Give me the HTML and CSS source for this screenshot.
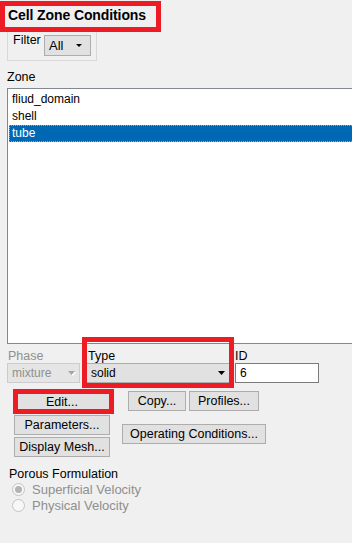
FILE: index.html
```html
<!DOCTYPE html>
<html lang="en">
<head>
    <meta charset="UTF-8">
    <meta name="viewport" content="width=device-width, initial-scale=1.0">
    <title>Cell Zone Conditions</title>
    <link rel="stylesheet" href="styles.css">
</head>
<body>
    <div class="panel">
        <div class="title">Cell Zone Conditions</div>

        <div class="filter-group">
            <span class="filter-label">Filter</span>
            <div class="combo combo-filter">
                <span>All</span>
                <svg class="caret" width="6" height="3" viewBox="0 0 6 3"><polygon points="0,0 6,0 3,3" fill="#000"/></svg>
            </div>
        </div>

        <div class="zone-label">Zone</div>
        <ul class="zone-list">
            <li>fliud_domain</li>
            <li>shell</li>
            <li class="selected">tube</li>
        </ul>

        <div class="fields">
            <div class="field field-phase">
                <span class="field-label disabled">Phase</span>
                <div class="combo combo-disabled">
                    <span>mixture</span>
                    <svg class="caret" width="8" height="5" viewBox="0 0 8 5"><polygon points="1,1 8,1 4.5,5" fill="#fff"/><polygon points="0,0 7,0 3.5,4" fill="#a3a3a3"/></svg>
                </div>
            </div>
            <div class="field field-type marked">
                <span class="field-label">Type</span>
                <div class="combo combo-type">
                    <span>solid</span>
                    <svg class="caret" width="7" height="4" viewBox="0 0 7 4"><polygon points="0,0 7,0 3.5,4" fill="#000"/></svg>
                </div>
            </div>
            <div class="field field-id">
                <span class="field-label">ID</span>
                <div class="text-input">6</div>
            </div>
        </div>

        <div class="actions">
            <div class="actions-left">
                <button class="btn btn-edit marked">Edit...</button>
                <button class="btn btn-params">Parameters...</button>
                <button class="btn btn-mesh">Display Mesh...</button>
            </div>
            <div class="actions-right">
                <div class="actions-row">
                    <button class="btn btn-copy">Copy...</button>
                    <button class="btn btn-profiles">Profiles...</button>
                </div>
                <button class="btn btn-operating">Operating Conditions...</button>
            </div>
        </div>

        <div class="porous">
            <div class="porous-label">Porous Formulation</div>
            <div class="radio checked"><span class="radio-circle"></span>Superficial Velocity</div>
            <div class="radio"><span class="radio-circle"></span>Physical Velocity</div>
        </div>
    </div>
</body>
</html>
```

FILE: styles.css
```css
body {
    margin: 0;
    background-color: #f0f0f0;
    color: #000;
    font-family: "Liberation Sans", Arial, sans-serif;
    font-size: 12px;
    overflow: hidden;
}
.panel {
    width: 352px;
    height: 543px;
    overflow: hidden;
}
.title {
    box-sizing: border-box;
    width: 161px;
    height: 31px;
    margin-top: 1px;
    padding: 0 0 2px 3px;
    border: 5px solid #ed1c24;
    font-size: 14px;
    font-weight: bold;
    line-height: 19px;
    letter-spacing: -0.1px;
}
.filter-group {
    box-sizing: border-box;
    display: flex;
    align-items: flex-start;
    width: 90px;
    height: 29px;
    margin-left: 7px;
    padding-left: 5px;
    border: 1px solid #d9d9d9;
    border-top: none;
}
.filter-label {
    width: 31px;
    margin-top: 1px;
    font-size: 12.5px;
    line-height: 14px;
}
.combo {
    box-sizing: border-box;
    display: flex;
    align-items: center;
    justify-content: space-between;
    height: 20px;
    padding: 0 5px 0 4px;
    background: #e1e1e1;
    border: 1px solid #adadad;
}
.combo-filter {
    width: 47px;
    height: 21px;
    margin-top: 3px;
    padding-right: 8px;
    font-size: 13px;
}
.combo-disabled {
    background: #e5e5e5;
    border-color: #cccccc;
    color: #8f8f8f;
    padding-right: 3px;
}
.combo-type {
    padding-right: 4px;
}
.caret {
    display: block;
}
.zone-label {
    margin: 9px 0 4px 7px;
    font-size: 12.5px;
    line-height: 14px;
}
.zone-list {
    box-sizing: border-box;
    width: 360px;
    height: 256px;
    margin: 0 0 0 7px;
    padding: 2px 0 0 0;
    list-style: none;
    background: #fff;
    border: 1px solid #828790;
}
.zone-list li {
    box-sizing: border-box;
    height: 17px;
    margin-left: 1px;
    padding-left: 3px;
    line-height: 17px;
}
.zone-list li.selected {
    background: #0067b4;
    color: #fff;
    outline: 1px dotted #d9a066;
    outline-offset: -1px;
}
.fields {
    display: flex;
    margin-top: 5px;
}
.field-label {
    display: block;
    padding-left: 1px;
    font-size: 12.5px;
    line-height: 14px;
}
.field-label.disabled {
    color: #8f8f8f;
}
.field-phase {
    width: 73px;
    margin-left: 7px;
}
.field-type {
    width: 144px;
    margin-left: 6px;
}
.field-type .field-label {
    padding-left: 2px;
}
.field-id {
    width: 84px;
    margin-left: 5px;
}
.field-id .field-label {
    padding-left: 0;
}
.text-input {
    box-sizing: border-box;
    height: 20px;
    padding-left: 4px;
    background: #fff;
    border: 1px solid #7a7a7a;
    line-height: 18px;
}
.marked {
    position: relative;
}
.marked::after {
    content: "";
    position: absolute;
    border: 5px solid #ed1c24;
    pointer-events: none;
}
.field-type::after {
    top: -12px;
    left: -4px;
    right: -4px;
    bottom: -5px;
}
.btn-edit::after {
    top: -4px;
    left: -2px;
    right: -5px;
    bottom: -3px;
}
.actions {
    display: flex;
    align-items: flex-start;
    margin-top: 8px;
}
.actions-left {
    display: flex;
    flex-direction: column;
    width: 96px;
    margin-left: 14px;
}
.btn {
    box-sizing: border-box;
    height: 20px;
    margin: 0;
    padding: 0;
    background: #e1e1e1;
    border: 1px solid #adadad;
    border-radius: 0;
    color: #000;
    font-family: "Liberation Sans", Arial, sans-serif;
    font-size: 12.5px;
    line-height: 18px;
    text-align: center;
}
.btn-edit {
    margin-top: 1px;
}
.btn-params {
    margin-top: 3px;
}
.btn-mesh {
    margin-top: 2px;
}
.actions-right {
    display: flex;
    flex-direction: column;
    align-items: flex-start;
    margin-left: 12px;
}
.actions-row {
    display: flex;
    padding-left: 6px;
}
.btn-copy {
    width: 58px;
}
.btn-profiles {
    width: 70px;
    margin-left: 3px;
}
.btn-operating {
    width: 144px;
    margin-top: 13px;
}
.porous {
    margin-top: 10px;
}
.porous-label {
    margin-left: 9px;
    font-size: 12.5px;
    line-height: 14px;
}
.porous .radio:first-of-type {
    margin-top: 2px;
}
.radio {
    display: flex;
    align-items: center;
    height: 16px;
    padding-left: 12px;
    color: #8f8f8f;
    font-size: 13px;
}
.radio-circle {
    box-sizing: border-box;
    display: flex;
    align-items: center;
    justify-content: center;
    width: 13px;
    height: 13px;
    margin-right: 7px;
    background: #f7f7f7;
    border: 1px solid #c4c4c4;
    border-radius: 50%;
}
.radio.checked .radio-circle::after {
    content: "";
    width: 7px;
    height: 7px;
    background: #b3b3b3;
    border-radius: 50%;
}
```
